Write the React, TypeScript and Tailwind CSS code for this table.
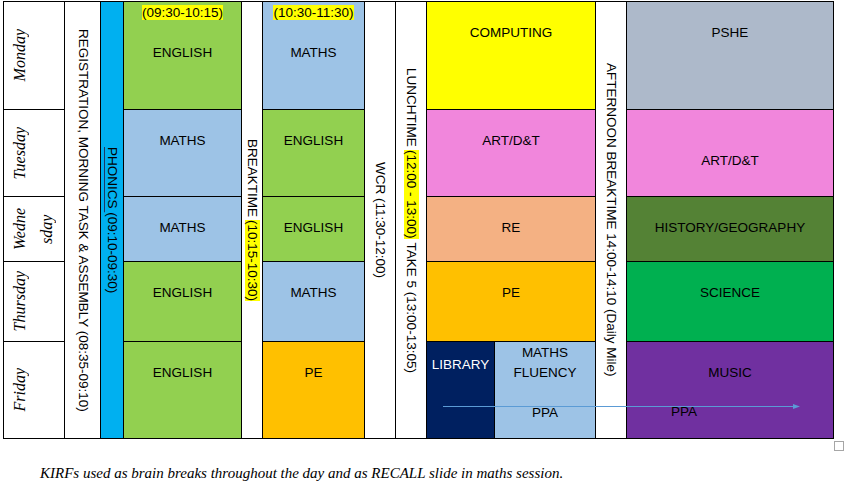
import type { ReactNode } from "react";

type CellProps = {
  bg: string;
  lines: ReactNode[];
  className?: string;
};

// one timetable slot, lines stacked from the top like a Word cell
function Cell({ bg, lines, className = "" }: CellProps) {
  return (
    <div className={`border-r border-b border-black pt-[1px] text-center leading-[20px] ${bg} ${className}`}>
      {lines.map((line, i) => (
        <div key={i}>{line === "" ? "\u00a0" : line}</div>
      ))}
    </div>
  );
}

function VCell({ children, className = "" }: { children: ReactNode; className?: string }) {
  return (
    <div className={`row-span-5 flex items-center justify-center border-r border-b border-black ${className}`}>
      <div className="whitespace-nowrap leading-[20px] [writing-mode:vertical-rl]">{children}</div>
    </div>
  );
}

function DayCell({ children }: { children: ReactNode }) {
  return (
    <div className="flex items-center border-r border-b border-black bg-white pl-[2px]">
      <div className="rotate-180 whitespace-nowrap text-center font-['Liberation_Serif',serif] text-[16px] italic leading-[27px] [writing-mode:vertical-rl]">
        {children}
      </div>
    </div>
  );
}

function Hl({ children }: { children: ReactNode }) {
  return <span className="bg-[#ffff00]">{children}</span>;
}

export default function App() {
  return (
    <div className="relative h-[481px] w-[846px] overflow-hidden bg-white pt-[1px] pl-[3px] font-['Liberation_Sans',Arial,sans-serif] text-[13.5px] text-black">
      <div className="grid w-[831px] grid-cols-[61px_36px_23px_118px_21px_102px_31px_31px_68px_101px_31px_207px] grid-rows-[108px_87px_65px_80px_97px] border-t border-l border-black">
        {/* Monday */}
        <DayCell>Monday</DayCell>
        <VCell className="bg-white">REGISTRATION, MORNING TASK &amp; ASSEMBLY (08:35-09:10)</VCell>
        <VCell className="bg-[#00b0f0]">
          <span className="underline decoration-[#1f3864] [text-underline-position:left]">PHONICS </span>
          (09:10-09:30)
        </VCell>
        <Cell bg="bg-[#92d050]" lines={[<Hl>(09:30-10:15)</Hl>, "", "ENGLISH"]} />
        <VCell className="bg-white">
          BREAKTIME <Hl>(10:15-10:30)</Hl>
        </VCell>
        <Cell bg="bg-[#9dc3e6]" lines={[<Hl>(10:30-11:30)</Hl>, "", "MATHS"]} />
        <VCell className="bg-white">WCR (11:30-12:00)</VCell>
        <VCell className="bg-white">
          LUNCHTIME <Hl>(12:00 - 13:00)</Hl> TAKE 5 (13:00-13:05)
        </VCell>
        <Cell bg="bg-[#ffff00]" className="col-span-2" lines={["", "COMPUTING"]} />
        <VCell className="bg-white">AFTERNOON BREAKTIME 14:00-14:10 (Daily Mile)</VCell>
        <Cell bg="bg-[#adb9ca]" lines={["", "PSHE"]} />

        {/* Tuesday */}
        <DayCell>Tuesday</DayCell>
        <Cell bg="bg-[#9dc3e6]" lines={["", "MATHS"]} />
        <Cell bg="bg-[#92d050]" lines={["", "ENGLISH"]} />
        <Cell bg="bg-[#f186dc]" className="col-span-2" lines={["", "ART/D&T"]} />
        <Cell bg="bg-[#f186dc]" lines={["", "", "ART/D&T"]} />

        {/* Wednesday */}
        <DayCell>
          Wedne
          <br />
          sday
        </DayCell>
        <Cell bg="bg-[#9dc3e6]" lines={["", "MATHS"]} />
        <Cell bg="bg-[#92d050]" lines={["", "ENGLISH"]} />
        <Cell bg="bg-[#f4b183]" className="col-span-2" lines={["", "RE"]} />
        <Cell bg="bg-[#548235]" lines={["", "HISTORY/GEOGRAPHY"]} />

        {/* Thursday */}
        <DayCell>Thursday</DayCell>
        <Cell bg="bg-[#92d050]" lines={["", "ENGLISH"]} />
        <Cell bg="bg-[#9dc3e6]" lines={["", "MATHS"]} />
        <Cell bg="bg-[#ffc000]" className="col-span-2" lines={["", "PE"]} />
        <Cell bg="bg-[#00b050]" lines={["", "SCIENCE"]} />

        {/* Friday */}
        <DayCell>Friday</DayCell>
        <Cell bg="bg-[#92d050]" lines={["", "ENGLISH"]} />
        <Cell bg="bg-[#ffc000]" lines={["", "PE"]} />
        <Cell bg="bg-[#002060]" className="!pt-[13px] text-white" lines={["LIBRARY"]} />
        <Cell bg="bg-[#9dc3e6]" lines={["MATHS", "FLUENCY", "", "PPA"]} />
        <Cell bg="bg-[#7030a0]" lines={["", "MUSIC"]} />
      </div>

      <div className="mt-[2px] ml-[831px] h-[10px] w-[10px] border border-[#a6a6a6]" />

      <div className="mt-[12px] pl-[37px] font-['Liberation_Serif',serif] text-[15px] italic leading-[20px]">
        KIRFs used as brain breaks throughout the day and as RECALL slide in maths session.
      </div>

      {/* PPA arrow drawn over the Friday cells */}
      <svg className="absolute left-[440px] top-[402px]" width="364" height="10" viewBox="0 0 364 10">
        <line x1="3" y1="4.5" x2="356" y2="4.5" stroke="#5b9bd5" strokeWidth="1" />
        <polygon points="353,2 360,4.5 353,7" fill="#5b9bd5" />
      </svg>
      <div className="absolute left-[671px] top-[402px] leading-[20px]">PPA</div>
    </div>
  );
}
